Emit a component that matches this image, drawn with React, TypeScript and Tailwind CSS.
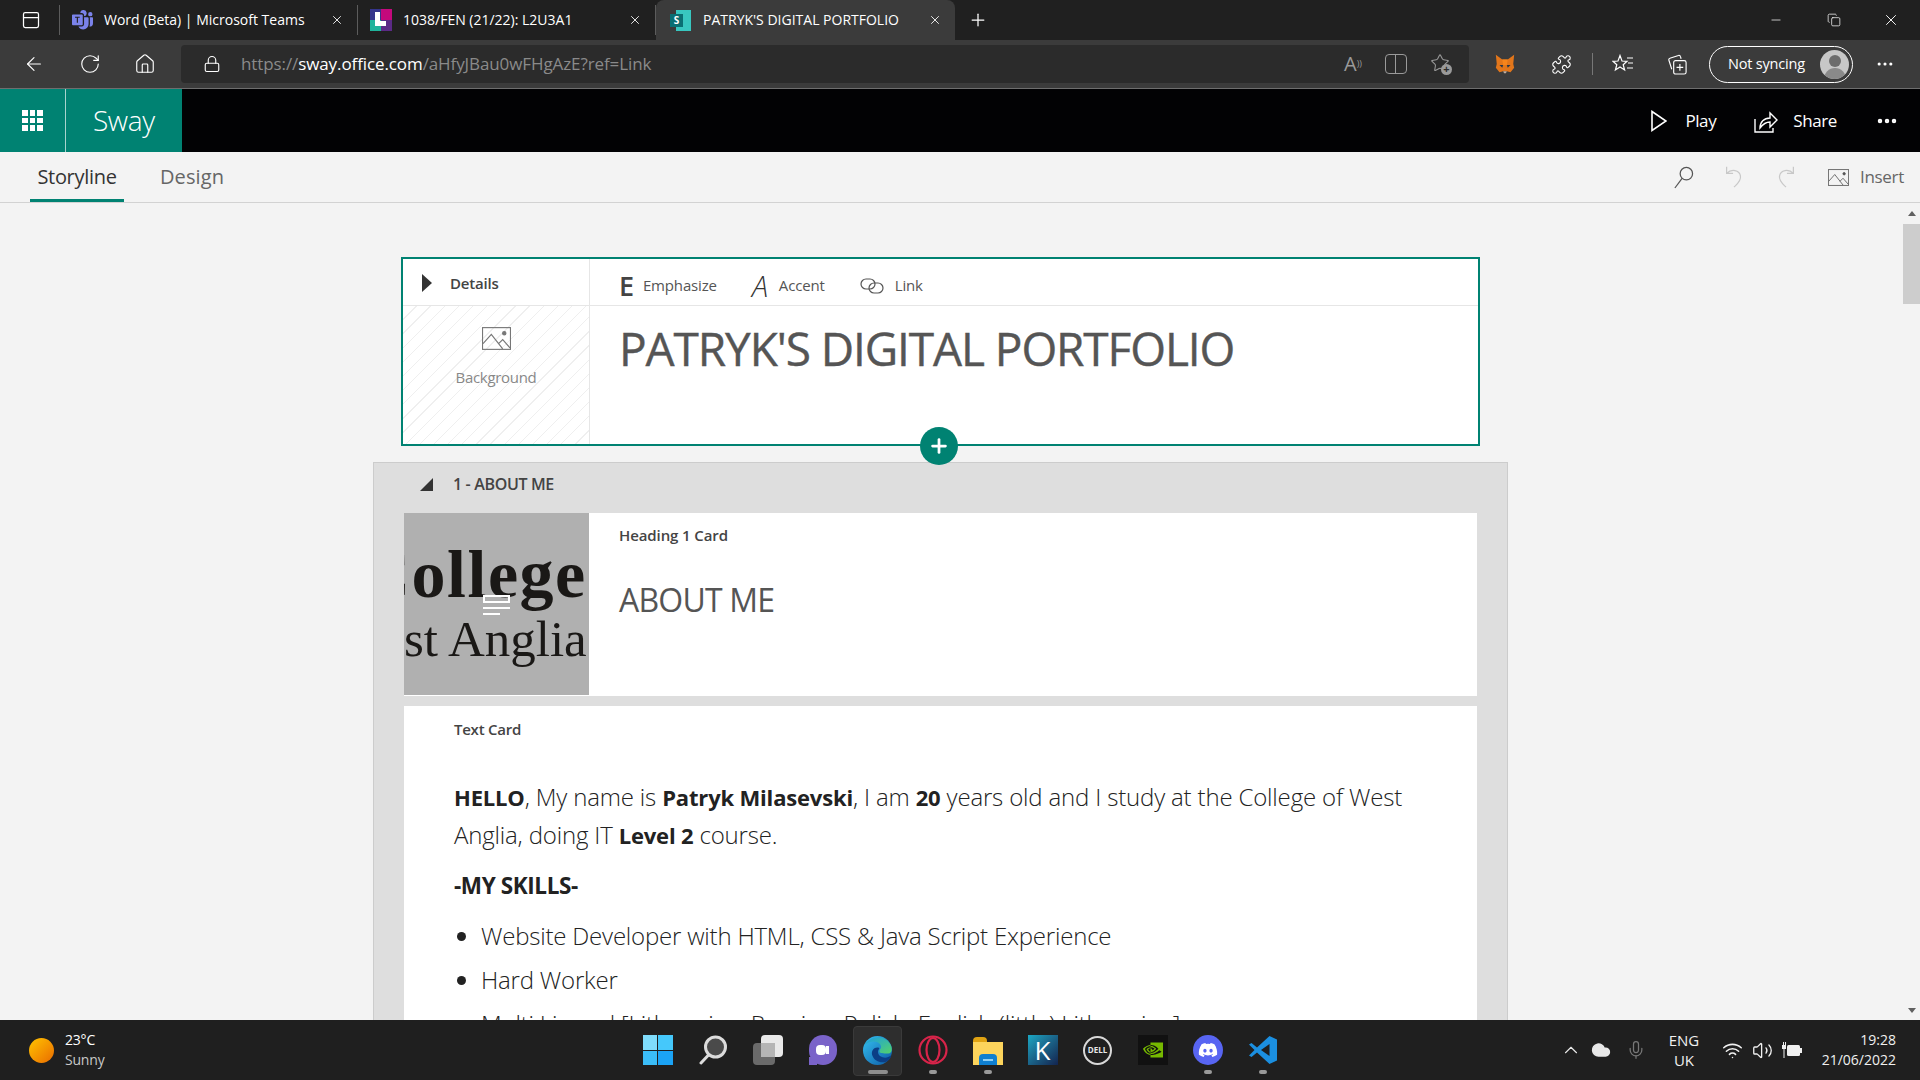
import {
  ArrowLeft, RotateCw, House, Lock, Puzzle, Plus, X, Minus, Copy, Mic, Wifi, Volume2, Cloud, Star, MoreHorizontal, PanelTop, ChevronUp,
} from "lucide-react";
import { BsMicrosoftTeams, BsNvidia } from "react-icons/bs";
import { FaDiscord } from "react-icons/fa6";

const sans = { fontFamily: '"Open Sans", "Noto Sans", sans-serif' };

function TeamsIcon() {
  return <BsMicrosoftTeams className="w-[21px] h-[21px] text-[#7b83eb] shrink-0" />;
}

function CanvasIcon() {
  return (
    <div className="relative w-[22px] h-[22px] shrink-0 grid grid-cols-2 overflow-hidden">
      <div className="bg-[#35358c]" />
      <div className="bg-[#c4097c]" />
      <div className="bg-[#1fb39b]" />
      <div className="bg-[#5b2a86]" />
      <span className="absolute left-[5px] top-[3px] w-[5px] h-[14px] bg-white" />
      <span className="absolute left-[5px] top-[12px] w-[11px] h-[5px] bg-white" />
    </div>
  );
}

function SwayIcon() {
  return (
    <div className="relative w-[21px] h-[21px] shrink-0">
      <div className="absolute right-0 top-0 w-[15px] h-[21px] bg-[#38c7c0]" />
      <div className="absolute left-0 top-[4px] w-[13px] h-[13px] bg-[#0a6f73] text-white text-[10px] font-bold leading-[13px] text-center">
        S
      </div>
    </div>
  );
}

function Tab({ icon, title, active }: { icon: React.ReactNode; title: string; active?: boolean }) {
  return (
    <div
      className={
        active
          ? "w-[299px] h-10 flex items-center pl-[14px] pr-[13px] gap-3 bg-[#3b3b3b] rounded-t-lg shrink-0"
          : "w-[298px] h-[30px] flex items-center pl-3 pr-[13px] gap-[11px] border-r border-[#5c5c5c] shrink-0"
      }
    >
      {icon}
      <span className="flex-1 text-[14px] leading-[18px] pb-px text-white whitespace-nowrap">{title}</span>
      <X className="w-[14px] h-[14px] text-white" strokeWidth={1.5} />
    </div>
  );
}

function FoxIcon() {
  return (
    <svg viewBox="0 0 24 24" className="w-[22px] h-[22px]">
      <polygon points="2,2 9,7 15,7 22,2 21,12 22,16 18,21 14,20 10,20 6,21 2,16 3,12" fill="#e2761b" />
      <polygon points="9,7 15,7 14,13 10,13" fill="#f6851b" />
      <polygon points="6,13 10,13 9,16" fill="#233447" />
      <polygon points="18,13 14,13 15,16" fill="#233447" />
      <polygon points="10,20 14,20 13,22 11,22" fill="#c0ad9e" />
    </svg>
  );
}

function EdgeIcon() {
  return (
    <svg viewBox="0 0 32 32" className="w-[31px] h-[31px]">
      <defs>
        <linearGradient id="edge-a" x1="0" y1="0" x2="1" y2="1">
          <stop offset="0" stopColor="#35c1f1" />
          <stop offset="1" stopColor="#0c59a4" />
        </linearGradient>
        <linearGradient id="edge-b" x1="0" y1="0" x2="1" y2="1">
          <stop offset="0" stopColor="#1b9de2" />
          <stop offset="1" stopColor="#54d36a" />
        </linearGradient>
      </defs>
      <circle cx="16" cy="16" r="15" fill="url(#edge-a)" />
      <path d="M3 10C7 2 22-1 29 9c3 5 2 10-2 10-5 0-9 0-9-2 0-3 3-3 1-7C16 5 8 6 3 10z" fill="url(#edge-b)" />
      <path d="M16 13c-5 0-7 5-5 9 2 5 9 8 15 5 3-2 4-4 4-6-3 3-8 3-11 1-3-2-3-6-1-8-1-1-1-1-2-1z" fill="#0b3f86" />
    </svg>
  );
}

function OperaIcon() {
  return (
    <svg viewBox="0 0 30 30" className="w-[30px] h-[30px]" fill="none" stroke="#d8244a" strokeWidth="2.2">
      <circle cx="15" cy="15" r="13.5" />
      <ellipse cx="15" cy="15" rx="6.5" ry="12" />
    </svg>
  );
}

function CodeIcon() {
  return (
    <svg viewBox="0 0 30 30" className="w-[30px] h-[30px]">
      <path d="M21.5 1 29 4.5v21L21.5 29 9 17.5 3.5 22 1 20.5 6.5 15 1 9.5 3.5 8 9 12.5z" fill="#1b8fe0" />
      <path d="M21.5 9 13 15l8.5 6z" fill="#1f1f1f" />
    </svg>
  );
}

function TaskSearchIcon() {
  return (
    <svg viewBox="0 0 30 30" className="w-[30px] h-[30px]">
      <circle cx="17.5" cy="12" r="10" fill="#4a4a4a" stroke="#dcdcdc" strokeWidth="3" />
      <line x1="10.5" y1="20" x2="3" y2="28" stroke="#dcdcdc" strokeWidth="3" strokeLinecap="round" />
    </svg>
  );
}

function WindowsIcon() {
  return (
    <div className="w-[30px] h-[30px] grid grid-cols-2 grid-rows-2 gap-px">
      <div className="bg-[#7fdcfb]" />
      <div className="bg-[#45c8fb]" />
      <div className="bg-[#3bbdf8]" />
      <div className="bg-[#1ba3f5]" />
    </div>
  );
}

function TaskViewIcon() {
  return (
    <div className="relative w-[30px] h-[30px]">
      <div className="absolute left-0 bottom-0 w-[22px] h-[22px] rounded-sm bg-[#6a6a6a]" />
      <div className="absolute right-0 top-0 w-[22px] h-[22px] rounded-sm bg-[#e9e9e9]" />
      <div className="absolute left-[8px] top-[8px] w-[14px] h-[14px] bg-[#b5b5b5]" />
    </div>
  );
}

function ChatIcon() {
  return (
    <div className="relative w-[28px] h-[30px] rounded-full bg-[#7a63c9] flex items-center justify-center">
      <div className="w-[10px] h-[10px] rounded-sm bg-white" />
      <div className="w-[3px] h-[8px] bg-white" />
      <span className="absolute left-0 bottom-0 w-[8px] h-[8px] bg-[#7a63c9]" />
    </div>
  );
}

function FolderIcon() {
  return (
    <div className="relative w-[30px] h-[30px]">
      <div className="absolute left-0 top-[2px] w-[14px] h-[6px] bg-[#e0a313] rounded-t-sm" />
      <div className="absolute left-0 top-[7px] w-[30px] h-[23px] bg-[#fcd45c]" />
      <div className="absolute left-[6px] bottom-0 w-[18px] h-[11px] bg-[#0f7fd0] rounded-t-sm flex items-center justify-center">
        <span className="w-[10px] h-[2px] bg-[#8fd0f5]" />
      </div>
    </div>
  );
}

function KIcon() {
  return (
    <div className="w-[30px] h-[30px] bg-gradient-to-br from-[#1aa8c4] to-[#12244f] text-white text-[26px] leading-[30px] font-normal text-center">
      K
    </div>
  );
}

function DellIcon() {
  return (
    <div className="w-[29px] h-[29px] rounded-full border-2 border-[#d8d8d8] flex items-center justify-center text-[8px] font-bold text-[#e8e8e8]">
      DELL
    </div>
  );
}

function BatteryPlug() {
  return (
    <svg viewBox="0 0 20 16" className="w-[20px] h-[16px] ml-[9px]" fill="#f0f0f0">
      <rect x="5" y="3" width="13" height="11" rx="1.5" />
      <rect x="18" y="6" width="2" height="5" />
      <rect x="0" y="3" width="4" height="4" />
      <rect x="1" y="0" width="1" height="3" />
      <rect x="3" y="0" width="1" height="3" />
      <rect x="1.5" y="7" width="1" height="9" />
    </svg>
  );
}

const TaskIcons: { key: string; icon: React.ReactNode; mark?: boolean; active?: boolean }[] = [
  { key: "start", icon: <WindowsIcon /> },
  { key: "search", icon: <TaskSearchIcon /> },
  { key: "tasks", icon: <TaskViewIcon /> },
  { key: "chat", icon: <ChatIcon /> },
  { key: "edge", icon: <EdgeIcon />, active: true },
  { key: "opera", icon: <OperaIcon />, mark: true },
  { key: "files", icon: <FolderIcon />, mark: true },
  { key: "k", icon: <KIcon /> },
  { key: "dell", icon: <DellIcon /> },
  { key: "nvidia", icon: <div className="w-[30px] h-[30px] bg-[#111] flex items-center justify-center"><BsNvidia className="w-[24px] h-[20px] text-[#76b900]" /></div> },
  { key: "discord", icon: <div className="w-[30px] h-[30px] rounded-full bg-[#5865f2] flex items-center justify-center"><FaDiscord className="w-[20px] h-[20px] text-white" /></div>, mark: true },
  { key: "code", icon: <CodeIcon />, mark: true },
];

function Taskbar() {
  return (
    <footer className="h-[60px] bg-[#1f1f1f] flex items-center shrink-0 text-white">
      <div className="w-[630px] flex items-center pl-[29px] gap-[11px] shrink-0">
        <div className="w-[25px] h-[25px] rounded-full bg-gradient-to-br from-[#ffc400] to-[#e86a00]" />
        <div className="text-[14px] leading-5 tracking-[-0.2px]">
          <div>23°C</div>
          <div className="text-[#c8c8c8]">Sunny</div>
        </div>
      </div>
      <div className="w-[660px] flex shrink-0">
        {TaskIcons.map(({ key, icon, mark, active }) => (
          <div key={key} className="relative w-[55px] h-[60px] flex items-center justify-center">
            {active && <div className="absolute left-[3px] top-[6px] w-[49px] h-[50px] rounded bg-[#2e2e2e] border border-[#3a3a3a]" />}
            <div className="relative">{icon}</div>
            {active && <span className="absolute left-[18px] top-[50px] w-[20px] h-[4px] rounded bg-[#8e8e8e]" />}
            {mark && <span className="absolute left-[24px] top-[50px] w-[8px] h-[4px] rounded bg-[#9a9a9a]" />}
          </div>
        ))}
      </div>
      <div className="flex-1 flex items-center h-full">
        <ChevronUp className="ml-[270px] w-[22px] h-[22px] text-[#e8e8e8]" strokeWidth={1.25} />
        <Cloud className="ml-[8px] w-[22px] h-[20px] text-[#e8e8e8] fill-[#e8e8e8]" />
        <Mic className="ml-[14px] w-[20px] h-[22px] text-[#777]" strokeWidth={1.5} />
        <div className="ml-[15px] w-[46px] text-center text-[15px] leading-5 text-[#f0f0f0]">
          <div>ENG</div>
          <div>UK</div>
        </div>
        <Wifi className="ml-[15px] w-[21px] h-[21px] text-[#f0f0f0]" strokeWidth={1.75} />
        <Volume2 className="ml-[9px] w-[21px] h-[21px] text-[#f0f0f0]" strokeWidth={1.5} />
        <BatteryPlug />
        <div className="ml-auto mr-[24px] text-right text-[14px] leading-[20px] text-[#f0f0f0]">
          <div>19:28</div>
          <div>21/06/2022</div>
        </div>
      </div>
    </footer>
  );
}

function FavAddIcon() {
  return (
    <div className="relative w-[22px] h-[22px] mr-[17px]">
      <Star className="w-[20px] h-[20px] text-[#9a9a9a]" strokeWidth={1.25} />
      <span className="absolute right-0 bottom-0 w-[11px] h-[11px] rounded-full bg-[#9a9a9a] text-[#2b2b2b] text-[11px] leading-[10px] text-center font-bold">+</span>
    </div>
  );
}

function FavListIcon() {
  return (
    <svg viewBox="0 0 22 22" className="ml-[19px] w-[22px] h-[22px]" fill="none" stroke="white" strokeWidth="1.2">
      <path d="M8 2.5 10 8l5 .3-3.8 3.4L12.6 17 8 14l-4.6 3 1.4-5.3L1 8.3 6 8z" />
      <path d="M15 5h6M16 10h5M15 15h6" />
    </svg>
  );
}

function CollectionsIcon() {
  return (
    <svg viewBox="0 0 22 22" className="ml-[33px] w-[21px] h-[21px]" fill="none" stroke="white" strokeWidth="1.2">
      <path d="M5 16 2 6.5a1.5 1.5 0 0 1 1-2L12 1.5a1.5 1.5 0 0 1 2 1l.8 2.5" />
      <rect x="7" y="7" width="13" height="14" rx="2" />
      <path d="M13.5 10.5v7M10 14h7" />
    </svg>
  );
}

function BrowserChrome() {
  return (
    <div className="shrink-0">
      <div className="h-10 bg-[#202020] flex items-center">
        <PanelTop className="ml-[21px] w-[20px] h-[20px] text-white" strokeWidth={1.5} />
        <div className="ml-[18px] w-px h-[30px] bg-[#5c5c5c]" />
        <Tab icon={<TeamsIcon />} title="Word (Beta) | Microsoft Teams" />
        <Tab icon={<CanvasIcon />} title="1038/FEN (21/22): L2U3A1" />
        <Tab icon={<SwayIcon />} title="PATRYK'S DIGITAL PORTFOLIO" active />
        <Plus className="ml-[13px] w-[20px] h-[20px] text-white" strokeWidth={1.5} />
        <Minus className="ml-[781px] w-[14px] h-[14px] text-white" strokeWidth={1.25} />
        <Copy className="ml-[44px] w-[14px] h-[14px] text-white" strokeWidth={1.25} />
        <X className="ml-[41px] w-[18px] h-[18px] text-white" strokeWidth={1.25} />
      </div>
      <div className="h-[49px] bg-[#3b3b3b] border-b border-[#6e6e6e] flex items-center text-white">
        <ArrowLeft className="ml-[23px] w-[22px] h-[22px]" strokeWidth={1.25} />
        <RotateCw className="ml-[34px] w-[22px] h-[22px]" strokeWidth={1.25} />
        <House className="ml-[33px] w-[22px] h-[22px]" strokeWidth={1.25} />
        <div className="ml-[25px] w-[1288px] h-[38px] rounded bg-[#2b2b2b] flex items-center">
          <Lock className="ml-[22px] w-[18px] h-[18px]" strokeWidth={1.5} />
          <div className="ml-[20px] text-[17px] tracking-[-0.1px] whitespace-nowrap text-[#8a8a8a]">
            https://<span className="text-white">sway.office.com</span>/aHfyJBau0wFHgAzE?ref=Link
          </div>
          <span className="ml-auto mr-[23px] text-[20px] text-[#9a9a9a]">A<sup className="text-[9px]">))</sup></span>
          <div className="mr-[23px] w-[22px] h-[20px] border border-[#9a9a9a] rounded-sm flex">
            <div className="w-1/2 border-r border-[#9a9a9a]" />
          </div>
          <FavAddIcon />
        </div>
        <div className="ml-[25px]"><FoxIcon /></div>
        <Puzzle className="ml-[35px] w-[21px] h-[21px]" strokeWidth={1.25} />
        <div className="ml-[20px] w-px h-[22px] bg-[#777]" />
        <FavListIcon />
        <CollectionsIcon />
        <div className="ml-[21px] w-[144px] h-[37px] rounded-full border border-white flex items-center pl-[18px] pr-[3px] justify-between">
          <span className="text-[14.5px] tracking-[-0.2px] whitespace-nowrap">Not syncing</span>
          <div className="w-[29px] h-[29px] rounded-full bg-[#c7c7c7] flex flex-col items-center justify-end overflow-hidden">
            <span className="w-[12px] h-[12px] rounded-full bg-[#6c6c6c] mb-px" />
            <span className="w-[22px] h-[11px] rounded-t-full bg-[#8a8a8a]" />
          </div>
        </div>
        <MoreHorizontal className="ml-[22px] w-[20px] h-[20px]" strokeWidth={1.75} />
      </div>
    </div>
  );
}

function GridIcon() {
  return (
    <div className="grid grid-cols-3 gap-[2px] w-[21px]">
      {Array.from({ length: 9 }, (_, i) => (
        <span key={i} className="h-[5.6px] bg-white" />
      ))}
    </div>
  );
}

function SearchGlass() {
  return (
    <svg viewBox="0 0 22 24" className="w-[21px] h-[23px] text-[#555]" fill="none" stroke="currentColor" strokeWidth="1.3">
      <circle cx="14" cy="8" r="6.5" />
      <line x1="9.5" y1="13" x2="2" y2="23" />
    </svg>
  );
}

function ImageFrame({ className }: { className: string }) {
  return (
    <svg viewBox="0 0 28 22" className={className} fill="none" stroke="currentColor" strokeWidth="1.1">
      <rect x="0.5" y="0.5" width="27" height="21" />
      <path d="M1 16 9 7l11 14M16 16l4-4 7 8" />
      <circle cx="21.5" cy="6" r="1.6" fill="currentColor" />
    </svg>
  );
}

function SwayHeader() {
  return (
    <div className="shrink-0">
      <div className="h-[63px] bg-[#020204] flex items-center text-white">
        <div className="w-[182px] h-full bg-[#008272] flex items-center">
          <div className="w-[66px] h-full border-r border-[#a8d3cd] flex items-center justify-center">
            <GridIcon />
          </div>
          <span className="ml-[27px] pb-[2px] text-[28px] font-light tracking-[-0.4px]">Sway</span>
        </div>
        <div className="flex-1" />
        <svg viewBox="0 0 16 22" className="w-[16px] h-[22px]" fill="none" stroke="white" strokeWidth="1.6">
          <path d="M1 1.5 15 11 1 20.5z" />
        </svg>
        <span className="ml-[18px] text-[17px] tracking-[-0.4px]">Play</span>
        <svg viewBox="0 0 24 24" className="ml-[38px] w-[24px] h-[24px]" fill="none" stroke="white" strokeWidth="1.4">
          <path d="M1 10v13h18v-4" />
          <path d="M6 19c0-6 4-10 10-10V4l7 7-7 7v-5c-4 0-7 2-10 6z" />
        </svg>
        <span className="ml-[15px] text-[17px] tracking-[-0.4px]">Share</span>
        <MoreHorizontal className="ml-[38px] mr-[21px] w-[24px] h-[24px]" strokeWidth={2.5} />
      </div>
      <div className="h-[51px] bg-[#f3f3f3] border-b border-[#d2d2d2] flex items-stretch">
        <div className="ml-[30px] w-[94px] border-b-[3px] border-[#008272] flex items-center justify-center pt-[3px] text-[20px] text-[#333] tracking-[-0.3px]">
          Storyline
        </div>
        <div className="ml-[36px] flex items-center text-[20px] text-[#666] tracking-[0.1px]">Design</div>
        <div className="ml-auto flex items-center">
          <SearchGlass />
          <svg viewBox="0 0 20 26" className="ml-[30px] w-[20px] h-[24px] text-[#c8c8c8]" fill="none" stroke="currentColor" strokeWidth="1.3">
            <path d="M2 2v7h7M2 9c5-5 14-4 15 3 1 5-4 9-7 12" />
          </svg>
          <svg viewBox="0 0 20 26" className="ml-[32px] w-[20px] h-[24px] text-[#c8c8c8]" fill="none" stroke="currentColor" strokeWidth="1.3">
            <path d="M18 2v7h-7M18 9c-5-5-14-4-15 3-1 5 4 9 7 12" />
          </svg>
          <ImageFrame className="ml-[32px] w-[21px] h-[17px] text-[#555]" />
          <span className="ml-[11px] mr-[16px] text-[17px] text-[#666] tracking-[-0.3px]">Insert</span>
        </div>
      </div>
    </div>
  );
}

function TitleCard() {
  return (
    <section className="relative ml-[401px] w-[1079px] h-[189px] border-2 border-[#008272] bg-white flex shrink-0">
      <div className="w-[187px] border-r border-[#e6e6e6] flex flex-col shrink-0">
        <div className="h-[47px] border-b border-[#e6e6e6] flex items-center pl-[19px] pt-[2px] gap-[18px]">
          <span className="w-0 h-0 border-y-[9px] border-y-transparent border-l-[10px] border-l-[#333]" />
          <span className="text-[15px] font-semibold text-[#444] tracking-[-0.2px]">Details</span>
        </div>
        <div className="flex-1 flex flex-col items-center pt-[21px] bg-[repeating-linear-gradient(135deg,#ffffff,#ffffff_9px,#efefef_9px,#efefef_10px)]">
          <ImageFrame className="w-[29px] h-[23px] text-[#777]" />
          <span className="mt-[16px] text-[15px] text-[#888] tracking-[-0.3px]">Background</span>
        </div>
      </div>
      <div className="flex-1 flex flex-col">
        <div className="h-[47px] border-b border-[#e6e6e6] flex items-center pl-[29px] pt-[7px] text-[15px] text-[#555] tracking-[-0.15px]">
          <span className="text-[27px] font-semibold leading-none text-[#444]">E</span>
          <span className="ml-[9px]">Emphasize</span>
          <span className="ml-[35px] text-[29px] italic leading-none text-[#333] font-light">A</span>
          <span className="ml-[11px]">Accent</span>
          <svg viewBox="0 0 24 16" className="ml-[35px] w-[24px] h-[16px] text-[#555]" fill="none" stroke="currentColor" strokeWidth="1.2">
            <rect x="1" y="1" width="14" height="10" rx="5" />
            <rect x="9" y="5" width="14" height="10" rx="5" />
          </svg>
          <span className="ml-[11px]">Link</span>
        </div>
        <h1 className="pl-[29px] pt-[11px] text-[46px] leading-[62px] text-[#555] tracking-[-1.1px] whitespace-nowrap [-webkit-text-stroke:0.4px_#555]">
          PATRYK'S DIGITAL PORTFOLIO
        </h1>
      </div>
      <div className="absolute left-[517px] top-[168px] w-[38px] h-[38px] rounded-full bg-[#008272] flex items-center justify-center">
        <Plus className="w-[22px] h-[22px] text-white" strokeWidth={3} />
      </div>
    </section>
  );
}

function CollegeThumb() {
  return (
    <div className="relative w-[185px] h-[182px] bg-[#b0b0b0] overflow-hidden shrink-0 text-[#1a1816]" style={{ fontFamily: '"Liberation Serif", serif' }}>
      <div className="pt-[28px] -ml-[43px] text-[68px] font-bold leading-[66px] whitespace-nowrap tracking-[1.5px]">College</div>
      <div className="text-[51px] leading-[64px] whitespace-nowrap">st Anglia</div>
      <div className="absolute left-[79px] top-[82px] w-[27px] flex flex-col gap-[4px]">
        <span className="h-[8px] border-2 border-white" />
        <span className="h-[2px] bg-white" />
        <span className="h-[2px] w-[17px] bg-white" />
      </div>
    </div>
  );
}

function StorySection() {
  return (
    <section className="ml-[373px] mt-[16px] w-[1135px] flex-1 bg-[#dedede] border-x border-t border-[#cccccc] flex flex-col">
      <div className="h-[50px] flex items-center pl-[46px] pb-[8px] shrink-0">
        <span className="w-0 h-0 border-b-[13px] border-b-[#333] border-l-[13px] border-l-transparent" />
        <span className="ml-[20px] text-[16px] text-[#444] font-semibold tracking-[-0.35px]">1 - ABOUT ME</span>
      </div>
      <div className="ml-[30px] w-[1073px] h-[183px] bg-white flex shrink-0">
        <CollegeThumb />
        <div className="pl-[30px]">
          <div className="pt-[11px] text-[15px] text-[#444] font-semibold tracking-[-0.1px]">Heading 1 Card</div>
          <div className="mt-[29px] text-[32px] text-[#555] tracking-[-0.8px]">ABOUT ME</div>
        </div>
      </div>
      <div className="ml-[30px] mt-[10px] w-[1073px] flex-1 bg-white pl-[50px] overflow-hidden">
        <div className="pt-[12px] text-[15px] text-[#444] font-semibold tracking-[-0.25px]">Text Card</div>
        <p className="mt-[37px] w-[960px] text-[24px] leading-[38px] font-light text-[#222] tracking-[-0.17px]">
          <b className="text-[22px] font-bold">HELLO</b>, My name is <b className="text-[22px] font-bold">Patryk Milasevski</b>, I am <b className="text-[22px] font-bold">20</b> years old and I study at the College of West Anglia, doing IT <b className="text-[22px] font-bold">Level 2</b> course.
        </p>
        <p className="mt-[13px] text-[22.5px] leading-[38px] font-bold text-[#222] tracking-[-0.4px]">-MY SKILLS-</p>
        <ul className="mt-[12px] list-disc pl-[27px] text-[24px] leading-[38px] font-light text-[#222] tracking-[-0.2px] flex flex-col gap-[6px]">
          <li>Website Developer with HTML, CSS &amp; Java Script Experience</li>
          <li>Hard Worker</li>
          <li>Multi Lingual [Lithuanian, Russian, Polish, English (little) Lithuanian]</li>
        </ul>
      </div>
    </section>
  );
}

function Scrollbar() {
  return (
    <div className="w-[17px] bg-[#f3f3f3] flex flex-col items-center shrink-0">
      <span className="mt-[8px] w-0 h-0 border-x-[4px] border-x-transparent border-b-[5px] border-b-[#606060]" />
      <div className="mt-[8px] w-[17px] h-[80px] bg-[#cdcdcd]" />
      <span className="mt-auto mb-[7px] w-0 h-0 border-x-[4px] border-x-transparent border-t-[5px] border-t-[#606060]" />
    </div>
  );
}

export default function App() {
  return (
    <div className="w-[1920px] h-screen flex flex-col overflow-hidden bg-[#f3f3f3]" style={sans}>
      <BrowserChrome />
      <SwayHeader />
      <main className="flex-1 min-h-0 flex">
        <div className="flex-1 min-w-0 flex flex-col pt-[54px] overflow-hidden">
          <TitleCard />
          <StorySection />
        </div>
        <Scrollbar />
      </main>
      <Taskbar />
    </div>
  );
}
